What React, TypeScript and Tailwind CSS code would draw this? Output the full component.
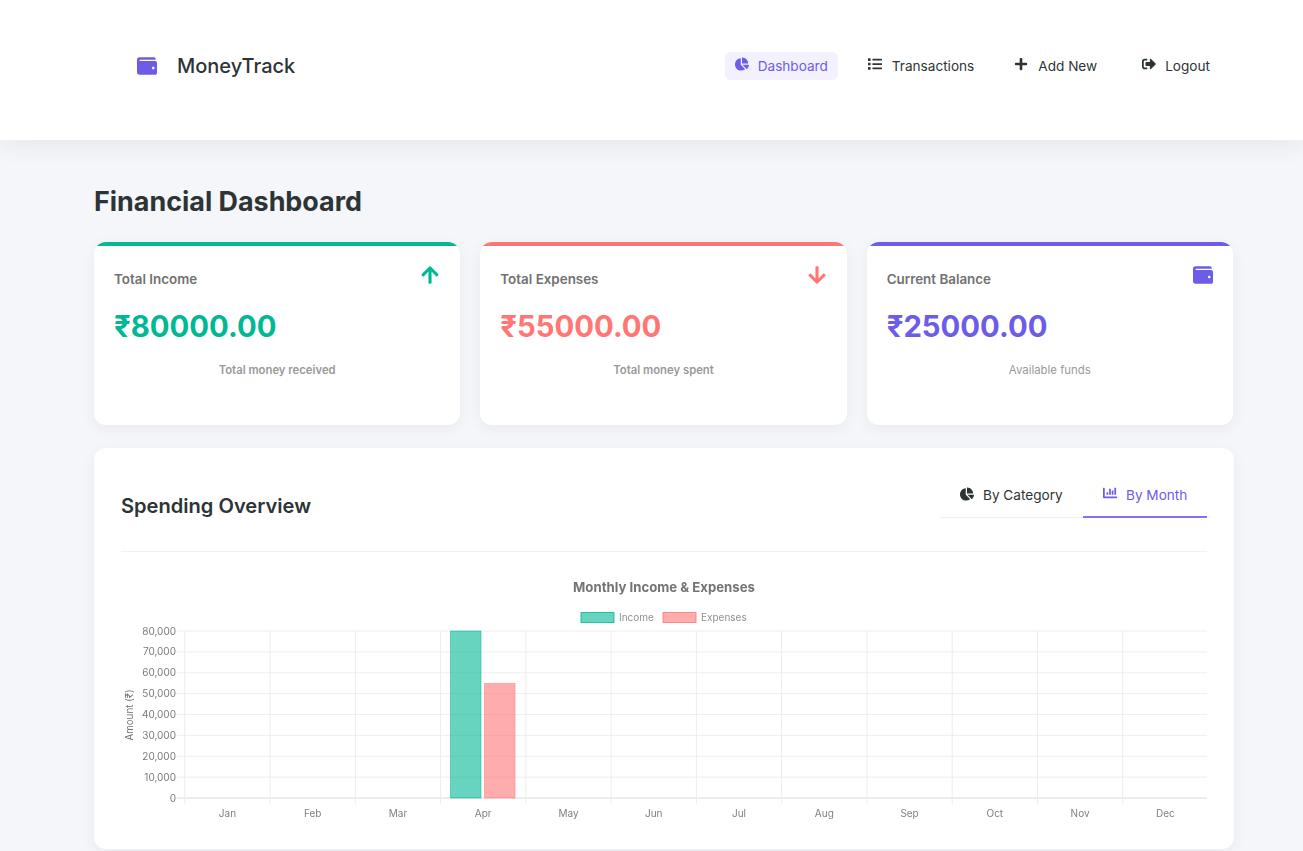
import { FaArrowDown, FaArrowUp, FaChartBar, FaChartPie, FaList, FaPlus, FaSignOutAlt, FaWallet } from "react-icons/fa";

const months = ["Jan", "Feb", "Mar", "Apr", "May", "Jun", "Jul", "Aug", "Sep", "Oct", "Nov", "Dec"];
const ticks = ["80,000", "70,000", "60,000", "50,000", "40,000", "30,000", "20,000", "10,000", "0"];

const PLOT_LEFT = 63.8;
const PLOT_RIGHT = 1087;
const PLOT_TOP = 71;
const PLOT_BOTTOM = 238;

function MonthlyChart() {
  const colWidth = (PLOT_RIGHT - PLOT_LEFT) / 12;
  const rowHeight = (PLOT_BOTTOM - PLOT_TOP) / 8;

  return (
    <svg width="1100" height="270" viewBox="0 0 1100 270" className="mt-2 block blur-[0.6px]" style={{ fontFamily: "Inter, sans-serif" }}>
      <text x="543" y="32" textAnchor="middle" fontSize="13.2" fontWeight="700" fill="#747474">
        Monthly Income &amp; Expenses
      </text>

      <rect x="460" y="52.5" width="33" height="10" fill="#00b894" fillOpacity="0.6" stroke="#00b894" strokeOpacity="0.8" />
      <text x="498" y="61" fontSize="10" fill="#909090">Income</text>
      <rect x="542" y="52.5" width="33" height="10" fill="#ff7675" fillOpacity="0.6" stroke="#ff7675" strokeOpacity="0.8" />
      <text x="580" y="61" fontSize="10" fill="#909090">Expenses</text>

      {ticks.map((t, i) => {
        const y = PLOT_TOP + i * rowHeight;
        return (
          <g key={t}>
            <line x1={PLOT_LEFT - 8} x2={PLOT_RIGHT - 1} y1={y} y2={y} stroke={i === 8 ? "#dadada" : "#eeeeee"} />
            <text x="55" y={y + 3.5} textAnchor="end" fontSize="10" fill="#7a7a7a">{t}</text>
          </g>
        );
      })}

      {months.map((m, i) => {
        const x = PLOT_LEFT + i * colWidth;
        return (
          <g key={m}>
            <line x1={x} x2={x} y1={PLOT_TOP} y2={PLOT_BOTTOM + 6} stroke="#ececec" />
            <text x={x + colWidth / 2} y="257" textAnchor="middle" fontSize="10" fill="#808080">{m}</text>
          </g>
        );
      })}

      <text transform="translate(11.5 155) rotate(-90)" textAnchor="middle" fontSize="9.8" fill="#707070">Amount (₹)</text>

      <rect x="329.5" y="71" width="30.5" height="167" fill="#00b894" fillOpacity="0.6" />
      <rect x="329.5" y="71" width="30.5" height="167" fill="none" stroke="#00b894" strokeOpacity="0.5" />
      <rect x="363.5" y="123.5" width="30.5" height="114.5" fill="#ff7675" fillOpacity="0.6" />
      <rect x="363.5" y="123.5" width="30.5" height="114.5" fill="none" stroke="#ff7675" strokeOpacity="0.5" />
    </svg>
  );
}

function StatCard({ title, amount, note, noteClass, icon, barClass, textClass }: {
  title: string;
  amount: string;
  note: string;
  noteClass: string;
  icon: React.ReactNode;
  barClass: string;
  textClass: string;
}) {
  return (
    <div className="h-[183px] overflow-hidden rounded-xl bg-white shadow-[0_4px_16px_rgba(0,0,0,0.05)]">
      <div className={`h-1 ${barClass}`} />
      <div className="px-5 pt-5">
        <div className="flex items-start justify-between">
          <h3 className="mt-[3px] text-[13.4px] leading-[20px] font-semibold text-[#717171]">{title}</h3>
          <div className={`-mt-[1px] text-[20px] ${textClass}`}>{icon}</div>
        </div>
        <div className={`mt-[20px] text-[29.3px] leading-[36px] font-bold ${textClass}`}>{amount}</div>
        <p className={`mt-[17px] text-center leading-[16px] text-[#999] ${noteClass}`}>{note}</p>
      </div>
    </div>
  );
}

function NavLink({ icon, label, active, className, iconClass }: { icon: React.ReactNode; label: string; active?: boolean; className?: string; iconClass?: string }) {
  return (
    <a
      href="#"
      className={`flex h-[28px] items-center rounded-md px-[10px] text-[13.6px] ${active ? "bg-[#f3f1fe] text-[#6c5ce7]" : "text-[#2d3436]"} ${className ?? ""}`}
    >
      <span className={`mb-[4px] text-[14px] ${iconClass ?? "mr-[10px]"}`}>{icon}</span>
      {label}
    </a>
  );
}

export default function App() {
  return (
    <div className="h-[851px] overflow-hidden bg-[#f5f6fa] text-[#2d3436]" style={{ fontFamily: "Inter, sans-serif" }}>
      <header className="flex h-[140px] items-center justify-between bg-white pr-[83px] pb-2 pl-[137px] shadow-[0_4px_24px_rgba(0,0,0,0.07)]">
        <div className="flex items-center">
          <FaWallet className="text-[20px] text-[#6c5ce7]" />
          <span className="ml-[20px] text-[20px] font-medium">MoneyTrack</span>
        </div>
        <nav className="flex items-center">
          <NavLink icon={<FaChartPie />} label="Dashboard" active iconClass="mr-[9px]" />
          <NavLink icon={<FaList />} label="Transactions" className="ml-5" />
          <NavLink icon={<FaPlus />} label="Add New" className="ml-5" />
          <NavLink icon={<FaSignOutAlt />} label="Logout" className="ml-[25px]" iconClass="mr-[9px]" />
        </nav>
      </header>

      <main className="pt-[43px] pr-[70px] pl-[94px]">
        <h1 className="text-[26.9px] leading-[36px] font-bold">Financial Dashboard</h1>

        <div className="mt-[23px] grid grid-cols-3 gap-5">
          <StatCard title="Total Income" amount="₹80000.00" note="Total money received" noteClass="text-[11.3px] font-semibold" icon={<FaArrowUp />} barClass="bg-[#00b894]" textClass="text-[#00b894]" />
          <StatCard title="Total Expenses" amount="₹55000.00" note="Total money spent" noteClass="text-[11.3px] font-semibold" icon={<FaArrowDown />} barClass="bg-[#ff7675]" textClass="text-[#ff7675]" />
          <StatCard title="Current Balance" amount="₹25000.00" note="Available funds" noteClass="text-[11.4px]" icon={<FaWallet />} barClass="bg-[#6c5ce7]" textClass="text-[#6c5ce7]" />
        </div>

        <section className="mt-[23px] -mr-px h-[401px] rounded-xl bg-white px-[27px] pt-[24px] shadow-[0_4px_16px_rgba(0,0,0,0.05)]">
          <div className="flex h-[80px] items-start justify-between border-b border-[#f0f0f0]">
            <h2 className="mt-[20px] text-[20.1px] leading-[28px] font-semibold">Spending Overview</h2>
            <div className="flex h-[46px] border-b border-[#f0f0f0]">
              <button className="flex w-[143px] items-center pt-[2px] pl-[20px] text-[13.6px]">
                <FaChartPie className="mr-[9px] mb-[4px] text-[14px]" />
                By Category
              </button>
              <button className="-mb-px flex w-[124px] items-center border-b-2 border-[#8173f0] pt-[2px] pl-[20px] text-[13.6px] text-[#6c5ce7]">
                <FaChartBar className="mr-[9px] mb-[4px] text-[14px]" />
                By Month
              </button>
            </div>
          </div>
          <MonthlyChart />
        </section>
      </main>
    </div>
  );
}
